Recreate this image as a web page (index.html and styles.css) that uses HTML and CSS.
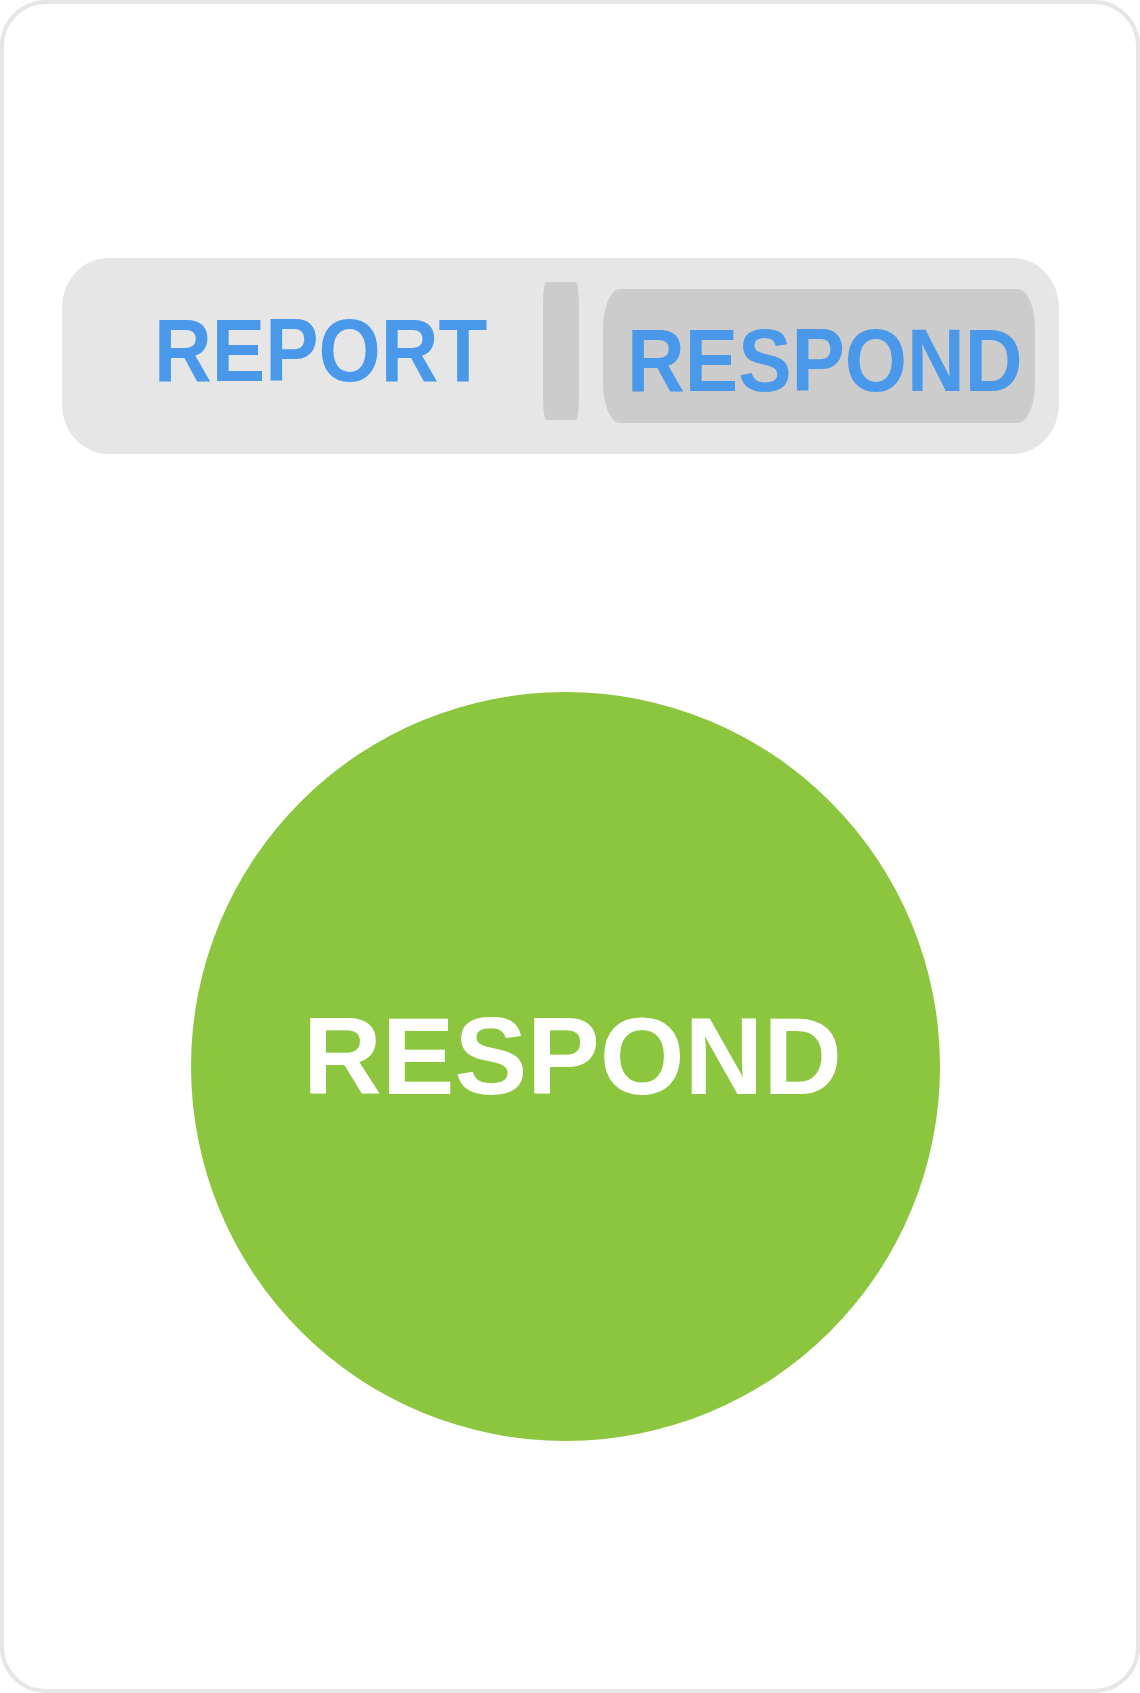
FILE: index.html
```html
<!DOCTYPE html>
<html lang="en">
<head>
<meta charset="utf-8">
<title>Respond</title>
<link rel="stylesheet" href="styles.css">
</head>
<body>
  <div class="card">
    <div class="toggle">
      <div class="seg seg-report"><span class="label">REPORT</span></div>
      <div class="divider"></div>
      <div class="seg seg-active"><span class="label">RESPOND</span></div>
    </div>
    <div class="circle">
      <span class="circle-label">RESPOND</span>
    </div>
  </div>
</body>
</html>
```

FILE: styles.css
```css
html, body {
  margin: 0;
  padding: 0;
  background: #ffffff;
}

body {
  font-family: "Liberation Sans", Arial, sans-serif;
}

.card {
  box-sizing: border-box;
  width: 1140px;
  height: 1693px;
  border: 4px solid #e6e6e6;
  border-radius: 46px;
  background: #ffffff;
  padding: 254px 0 0 58px;
  display: flex;
  flex-direction: column;
  align-items: flex-start;
}

.toggle {
  box-sizing: border-box;
  width: 997px;
  height: 196px;
  background: #e6e6e6;
  border-radius: 46px / 50px;
  padding: 0 24px;
  display: flex;
  align-items: center;
}

.seg {
  box-sizing: border-box;
  display: flex;
  align-items: center;
}

.seg-report {
  width: 457px;
  padding-left: 68px;
  margin-bottom: 10px;
}

.divider {
  width: 36px;
  height: 138px;
  background: #cccccc;
  border-radius: 3px / 24px;
  margin-bottom: 10px;
  flex: none;
}

.seg-active {
  width: 432px;
  height: 134px;
  margin-left: 24px;
  background: #cccccc;
  border-radius: 17px / 40px;
  padding-left: 24px;
  padding-top: 9px;
}

.label {
  display: inline-block;
  font-size: 80px;
  line-height: 80px;
  font-weight: 700;
  color: #4a98ea;
  transform: scaleY(1.12);
  white-space: nowrap;
}

.circle {
  width: 749px;
  height: 749px;
  margin-top: 238px;
  margin-left: 128.5px;
  border-radius: 50%;
  background: #8cc63f;
  display: flex;
  align-items: center;
  justify-content: center;
}

.circle-label {
  display: inline-block;
  font-size: 109px;
  line-height: 109px;
  font-weight: 700;
  color: #ffffff;
  white-space: nowrap;
  margin-left: 15px;
  margin-bottom: 21px;
}
```
